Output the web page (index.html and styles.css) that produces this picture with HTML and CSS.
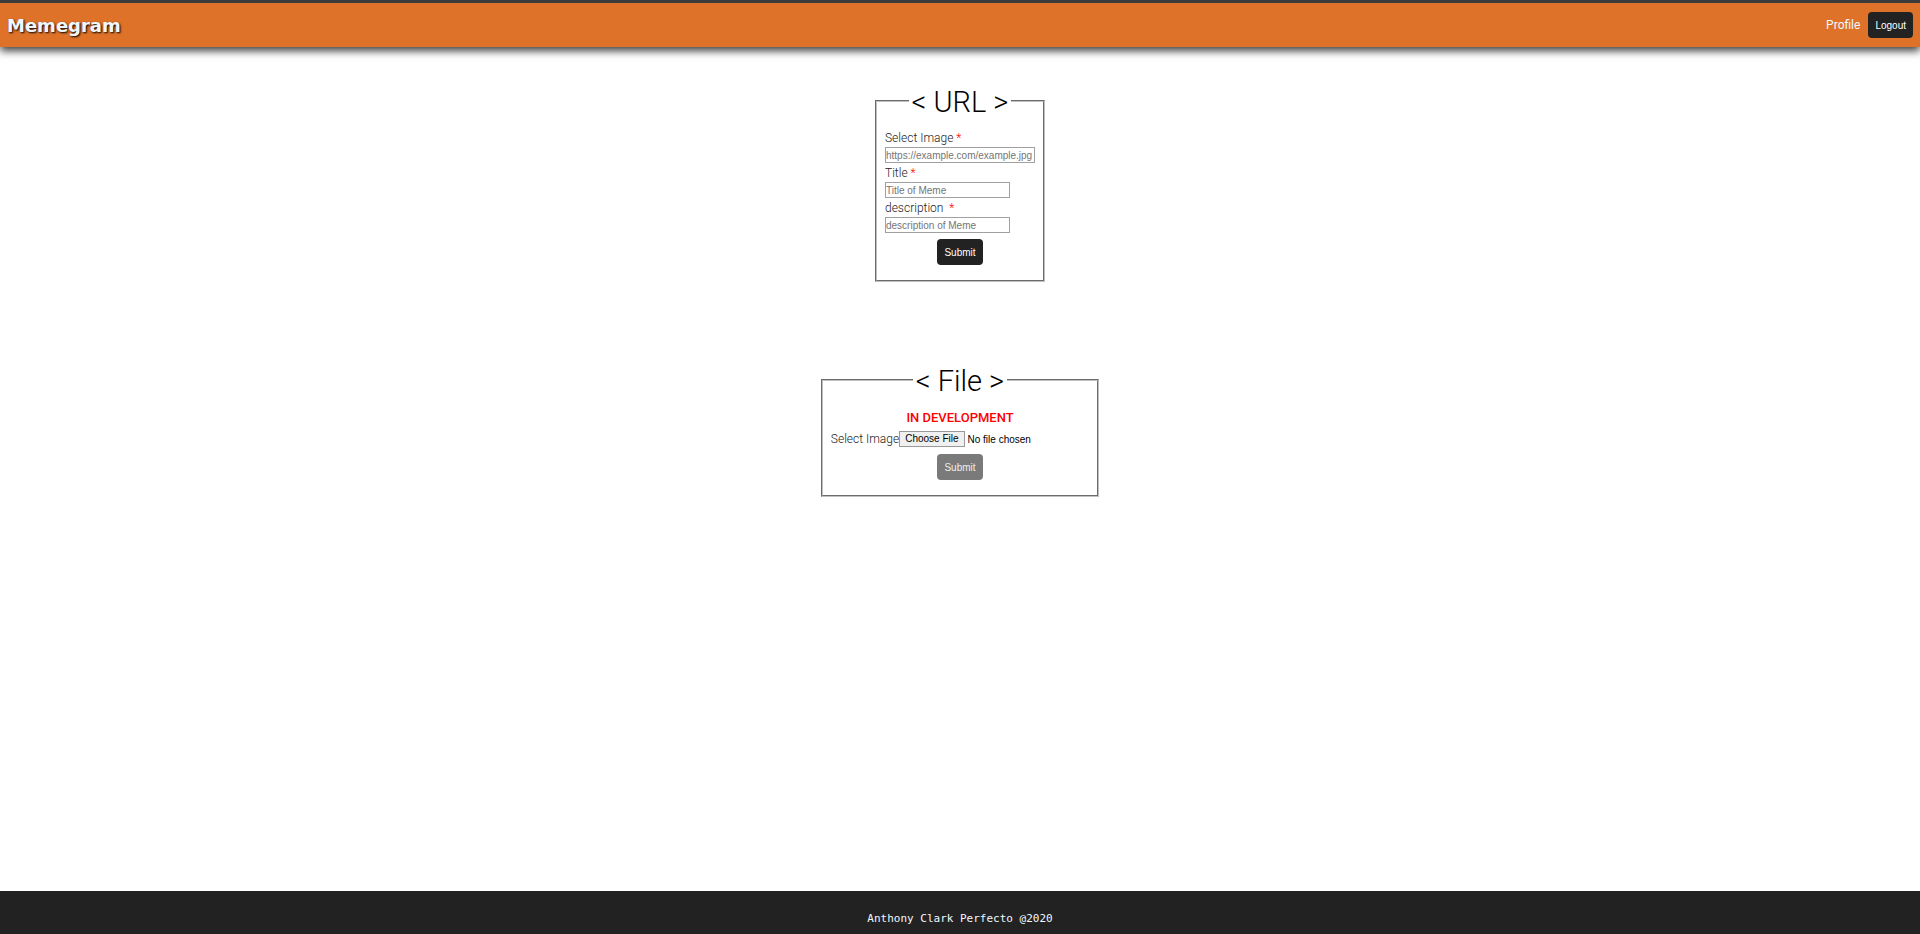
FILE: index.html
```html
<!DOCTYPE html>
<html lang="en">
<head>
<meta charset="utf-8">
<title>Memegram</title>
<link rel="stylesheet" href="styles.css">
</head>
<body>
<header class="header">
  <a class="logo" href="#">Memegram</a>
  <nav class="nav">
    <a class="nav-link" href="#">Profile</a>
    <button class="button" type="button">Logout</button>
  </nav>
</header>
<main class="main">
  <form class="form">
    <fieldset class="panel">
      <legend class="legend">&lt; URL &gt;</legend>
      <label class="label" for="url">Select Image <span class="required">*</span></label>
      <input class="input input-url" id="url" type="text" placeholder="https://example.com/example.jpg">
      <label class="label" for="title">Title <span class="required">*</span></label>
      <input class="input" id="title" type="text" placeholder="Title of Meme">
      <label class="label" for="description">description &nbsp;<span class="required">*</span></label>
      <input class="input" id="description" type="text" placeholder="description of Meme">
      <button class="button submit" type="submit">Submit</button>
    </fieldset>
  </form>
  <form class="form">
    <fieldset class="panel">
      <legend class="legend">&lt; File &gt;</legend>
      <p class="notice">IN DEVELOPMENT</p>
      <div class="file-row">
        <label class="label" for="file">Select Image</label>
        <input class="file" id="file" type="file">
      </div>
      <button class="button submit" type="submit" disabled>Submit</button>
    </fieldset>
  </form>
</main>
<footer class="footer">Anthony Clark Perfecto @2020</footer>
</body>
</html>
```
FILE: styles.css
```css
* {
  box-sizing: border-box;
}

body {
  display: flex;
  flex-direction: column;
  min-height: 100vh;
  margin: 0;
  background: #fff;
  color: #222;
  font-family: Roboto, sans-serif;
  font-size: 12px;
}

.header {
  display: flex;
  align-items: center;
  justify-content: space-between;
  height: 47px;
  padding: 0 7px;
  border-top: 3px solid #3b3b3b;
  background: #de7229;
  box-shadow: 0 4px 8px rgba(0, 0, 0, 0.75);
}

.logo {
  color: aliceblue;
  font-family: "DejaVu Sans", sans-serif;
  font-size: 18px;
  font-weight: 700;
  text-decoration: none;
  text-shadow: 1px 1px 2px #000;
}

.nav {
  display: flex;
  align-items: center;
  gap: 8px;
}

.nav-link {
  color: aliceblue;
  text-decoration: none;
}

.button {
  height: 26px;
  padding: 0 7px;
  border: 0;
  border-radius: 4px;
  background: #222;
  color: #fff;
  font-family: "Liberation Sans", Arial, sans-serif;
  font-size: 10px;
}

.button:disabled {
  background: #7a7a7a;
  color: #eee;
}

.main {
  display: flex;
  flex: 1;
  flex-direction: column;
  align-items: center;
  gap: 79px;
  padding: 35px 0;
}

.panel {
  display: flex;
  flex-direction: column;
  align-items: flex-start;
  margin: 0;
  padding: 8px 8px 15px;
  border: 2px groove #c0c0c0;
}

.legend {
  margin: 0 auto;
  padding: 2px 3px 0;
  color: #000;
  font-size: 29px;
  font-weight: 300;
  line-height: 36px;
}

.label {
  padding-top: 2px;
  font-weight: 300;
  line-height: 17px;
}

.required {
  color: #f00;
}

.input {
  width: 125px;
  height: 16px;
  padding: 0;
  border: 1px solid #a0a0a0;
  background: #fff;
  font-family: "Liberation Sans", Arial, sans-serif;
  font-size: 10px;
}

.input-url {
  width: 150px;
}

.input::placeholder {
  color: #757575;
}

.submit {
  align-self: center;
  margin-top: 6px;
}

.notice {
  align-self: center;
  margin: 0;
  color: #f00;
  font-size: 13px;
  font-weight: 500;
  line-height: 22px;
}

.file-row {
  display: flex;
  align-items: center;
}

.file {
  width: 190px;
  color: #000;
  font-family: "Liberation Sans", Arial, sans-serif;
  font-size: 10px;
}

.file::file-selector-button {
  height: 16px;
  margin-right: 3px;
  padding: 0 5px;
  border: 1px solid #999;
  background: #f0f0f0;
  color: #000;
  font-family: "Liberation Sans", Arial, sans-serif;
  font-size: 10px;
}

.footer {
  height: 43px;
  padding-top: 19px;
  background: #222;
  color: aliceblue;
  font-family: "DejaVu Sans Mono", monospace;
  font-size: 11px;
  line-height: 18px;
  text-align: center;
}
```
